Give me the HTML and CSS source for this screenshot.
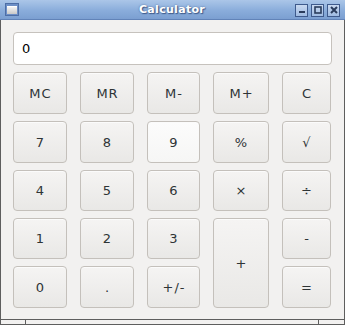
FILE: index.html
```html
<!DOCTYPE html>
<html>
<head>
<meta charset="utf-8">
<title>Calculator</title>
<link rel="stylesheet" href="styles.css">
</head>
<body>
<div id="Window">
  <div id="TitleBar">
    <div class="winicon"><div class="winicon-in"></div></div>
    <div class="title">Calculator</div>
    <div class="winbtns">
      <div class="wbtn"><svg width="8" height="8" viewBox="0 0 8 8"><rect x="1" y="5" width="6" height="2" fill="#2a3c5c"/></svg></div>
      <div class="wbtn"><svg width="8" height="8" viewBox="0 0 8 8"><rect x="1" y="1" width="6" height="6" fill="none" stroke="#2a3c5c" stroke-width="1.6"/></svg></div>
      <div class="wbtn"><svg width="8" height="8" viewBox="0 0 8 8"><path d="M1 1L7 7M7 1L1 7" stroke="#2a3c5c" stroke-width="2"/></svg></div>
    </div>
  </div>
  <div id="Body">
    <div id="Display">0</div>
    <div id="Keys">
      <div class="key">MC</div><div class="key">MR</div><div class="key">M-</div><div class="key">M+</div><div class="key">C</div>
      <div class="key">7</div><div class="key">8</div><div class="key hover">9</div><div class="key">%</div><div class="key">&#8730;</div>
      <div class="key">4</div><div class="key">5</div><div class="key">6</div><div class="key">&#215;</div><div class="key">&#247;</div>
      <div class="key">1</div><div class="key">2</div><div class="key">3</div><div class="key plus">+</div><div class="key">-</div>
      <div class="key">0</div><div class="key">.</div><div class="key">+/-</div><div class="key">=</div>
    </div>
  </div>
  <div id="StatusBar">
    <div class="sb1"></div><div class="sb2"></div><div class="sb3"></div>
  </div>
</div>
</body>
</html>
```
FILE: styles.css
```css
body {margin:0; padding:0; background:#f2f1f0;}
* {box-sizing:border-box; font-family:"DejaVu Sans",sans-serif;}
#Window {width:345px; height:325px; display:flex; flex-direction:column; border-left:1px solid #5e5e5e; border-right:1px solid #5e5e5e; background:#f2f1f0;}
#TitleBar {
height:20px;
flex:none;
display:flex;
align-items:center;
background:linear-gradient(#abc6e8, #8aaddb 55%, #7b9fd1);
border-bottom:1px solid #6183b8;
margin:0 -1px;
padding:0 5px 0 5px;
}
#TitleBar .winicon {width:14px; height:13px; background:#6d8fc6; border:1px solid #4d6ea6; padding:2px 1px 1px 1px;}
#TitleBar .winicon-in {height:100%; background:linear-gradient(#f4f4f4, #c8c8c8); border-top:1px solid #fff;}
#TitleBar .title {flex:1; text-align:center; color:#fff; font-size:11px; font-weight:bold; text-shadow:1px 1px 1px #3d5a8a, 0 0 2px #4a6898; padding-left:30px; letter-spacing:0.3px;}
#TitleBar .winbtns {display:flex; gap:3px; margin-top:1px;}
#TitleBar .wbtn {width:13px; height:13px; border:1px solid #3e5a8c; background:linear-gradient(#c9d9f0, #9fbbe2); display:flex; align-items:center; justify-content:center;}
#Body {flex:1; padding:12px 12px 0 12px; display:flex; flex-direction:column;}
#Display {
height:33px;
background:#fff;
border:1px solid #c6c2bd;
border-radius:4px;
font-size:13px;
color:#000;
padding:8px 0 0 8px;
}
#Keys {
margin-top:7px;
display:grid;
grid-template-columns:54px 54px 53px 56px 49px;
grid-template-rows:42px 42px 41px 41px 42px;
column-gap:13px;
row-gap:7px;
}
.key {
border:1px solid #c4c0bb;
border-radius:4px;
background:linear-gradient(#f5f4f3, #e9e8e6);
display:flex;
align-items:center;
justify-content:center;
font-size:13px;
letter-spacing:1px;
padding-left:1px;
color:#2e3436;
box-shadow:inset 0 1px 0 #fbfbfb;
}
.key.hover {background:linear-gradient(#fcfcfc, #f6f6f5);}
.key.plus {grid-column:4; grid-row:4 / span 2;}
#StatusBar {height:6px; flex:none; border-top:1px solid #5e5e5e; border-bottom:1px solid #5e5e5e; display:flex; margin-top:11px; background:#f2f1f0;}
#StatusBar .sb1 {width:25px; border-right:1px solid #5e5e5e;}
#StatusBar .sb2 {flex:1; border-right:1px solid #5e5e5e;}
#StatusBar .sb3 {width:25px;}
```
